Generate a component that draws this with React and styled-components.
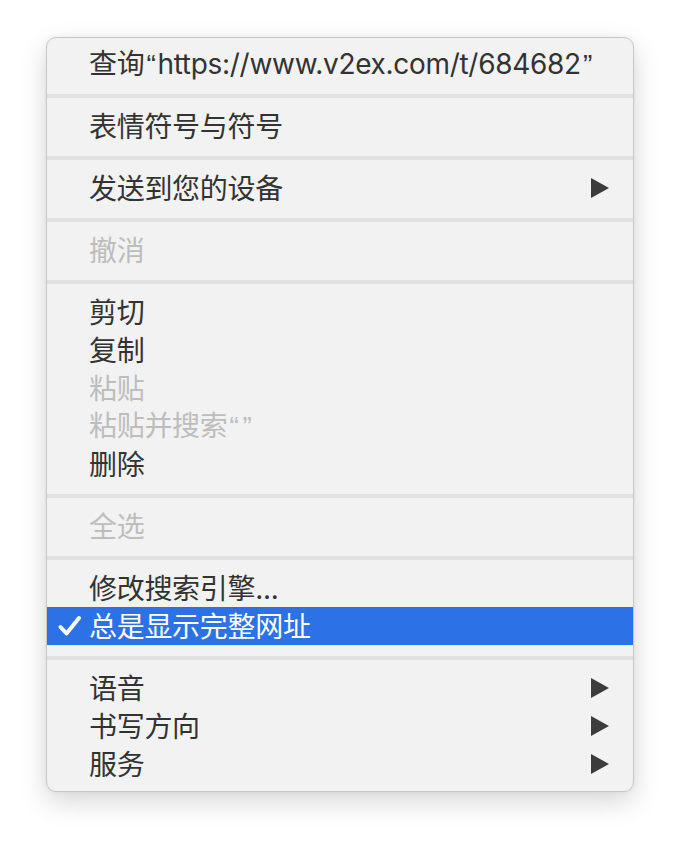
import React from "react";
import styled, { createGlobalStyle } from "styled-components";

const GlobalStyle = createGlobalStyle`
  html, body {
    margin: 0;
    padding: 0;
    background: #ffffff;
  }
`;

const Page = styled.div`
  padding: 37px 0 54px 46px;
`;

const Menu = styled.div`
  width: 588px;
  box-sizing: border-box;
  padding: 7px 0 8px;
  background: #f2f2f2;
  border: 1px solid #c6c6c6;
  border-radius: 10px;
  box-shadow: 0 10px 28px rgba(0, 0, 0, 0.16), 0 0 6px rgba(0, 0, 0, 0.05);
  font-family: "Inter", "Noto Sans CJK SC", sans-serif;
  font-size: 28px;
  letter-spacing: -0.3px;
  color: #333333;
`;

const Row = styled.div`
  position: relative;
  display: flex;
  align-items: center;
  height: 38px;
  padding: 0 24px 0 42px;
  background: ${(p) => (p.$active ? "#2d71e6" : "transparent")};
  color: ${(p) => (p.$active ? "#ffffff" : p.$disabled ? "#bdbdbd" : "#333333")};
`;

const Label = styled.span`
  flex: 1;
  white-space: nowrap;
  line-height: 38px;
  padding-top: 1px;
`;

const Quote = styled.span`
  font-family: "Liberation Sans", sans-serif;
  margin: 0 2px;
`;

const Separator = styled.div`
  padding: 11px 0 9px;
  &::after {
    content: "";
    display: block;
    height: 4px;
    background: #e1e1e1;
  }
`;

const Check = styled.svg`
  position: absolute;
  left: 10px;
  top: 8px;
  width: 25px;
  height: 22px;
`;

const Arrow = styled.svg`
  width: 18px;
  height: 20px;
  flex: none;
`;

const Submenu = () => (
  <Arrow viewBox="0 0 18 20">
    <path d="M0 0 L18 10 L0 20 Z" fill="#3c3c3c" />
  </Arrow>
);

const Item = ({ children, disabled, active, submenu }) => (
  <Row $disabled={disabled} $active={active}>
    {active && (
      <Check viewBox="0 0 25 22">
        <path
          d="M3.5 12 L9.5 18.5 L22 3"
          fill="none"
          stroke="#ffffff"
          strokeWidth="4"
          strokeLinecap="round"
          strokeLinejoin="round"
        />
      </Check>
    )}
    <Label>{children}</Label>
    {submenu && <Submenu />}
  </Row>
);

export default function App() {
  return (
    <Page>
      <GlobalStyle />
      <Menu>
        <Item>
          查询<Quote>“</Quote>https://www.v2ex.com/t/684682<Quote>”</Quote>
        </Item>
        <Separator />
        <Item>表情符号与符号</Item>
        <Separator />
        <Item submenu>发送到您的设备</Item>
        <Separator />
        <Item disabled>撤消</Item>
        <Separator />
        <Item>剪切</Item>
        <Item>复制</Item>
        <Item disabled>粘贴</Item>
        <Item disabled>
          粘贴并搜索<Quote>“</Quote>
          <Quote>”</Quote>
        </Item>
        <Item>删除</Item>
        <Separator />
        <Item disabled>全选</Item>
        <Separator />
        <Item>修改搜索引擎...</Item>
        <Item active>总是显示完整网址</Item>
        <Separator />
        <Item submenu>语音</Item>
        <Item submenu>书写方向</Item>
        <Item submenu>服务</Item>
      </Menu>
    </Page>
  );
}
